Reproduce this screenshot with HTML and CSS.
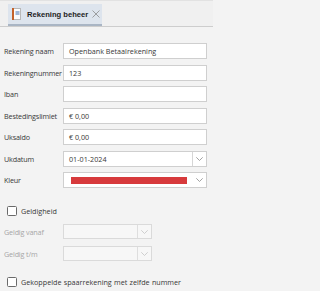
FILE: index.html
```html
<!DOCTYPE html>
<html lang="nl">
<head>
<meta charset="utf-8">
<link rel="stylesheet" href="styles.css">
</head>
<body>
<div class="tabbar">
  <div class="tab">
    <svg class="tab-icon" width="9" height="12" viewBox="0 0 9 12">
      <rect x="0.5" y="0.5" width="8" height="11" fill="#fbfbfb" stroke="#b8b8b8"/>
      <rect x="0" y="0" width="2" height="12" fill="#c4622a"/>
      <rect x="3.5" y="3" width="4" height="4" fill="#9fb6d6"/>
    </svg>
    <span class="tab-title">Rekening beheer</span>
    <svg class="tab-close" width="8" height="8" viewBox="0 0 8 8">
      <path d="M0.5 0.5 L7.5 7.5 M7.5 0.5 L0.5 7.5" stroke="#8a8a8a" stroke-width="0.8" fill="none"/>
    </svg>
  </div>
</div>
<div class="form">
  <div class="fields">
    <span class="label">Rekening naam</span>
    <div class="input">Openbank Betaalrekening</div>
    <span class="label">Rekeningnummer</span>
    <div class="input">123</div>
    <span class="label">Iban</span>
    <div class="input"></div>
    <span class="label">Bestedingslimiet</span>
    <div class="input">€ 0,00</div>
    <span class="label">Uksaldo</span>
    <div class="input">€ 0,00</div>
    <span class="label">Ukdatum</span>
    <div class="input combo">
      <span class="combo-text">01-01-2024</span>
      <span class="combo-btn split">
        <svg width="7" height="4" viewBox="0 0 7 4"><path d="M0.3 0.3 L3.5 3.5 L6.7 0.3" stroke="#8c8c8c" stroke-width="0.8" fill="none"/></svg>
      </span>
    </div>
    <span class="label">Kleur</span>
    <div class="input combo">
      <span class="combo-text"><span class="swatch"></span></span>
      <span class="combo-btn">
        <svg width="7" height="4" viewBox="0 0 7 4"><path d="M0.3 0.3 L3.5 3.5 L6.7 0.3" stroke="#8c8c8c" stroke-width="0.8" fill="none"/></svg>
      </span>
    </div>
  </div>

  <div class="check check-geldig">
    <span class="box"></span>
    <span class="check-text">Geldigheid</span>
  </div>

  <div class="fields sub">
    <span class="label disabled">Geldig vanaf</span>
    <div class="input combo off">
      <span class="combo-text"></span>
      <span class="combo-btn split">
        <svg width="7" height="4" viewBox="0 0 7 4"><path d="M0.3 0.3 L3.5 3.5 L6.7 0.3" stroke="#c4c4c4" stroke-width="0.8" fill="none"/></svg>
      </span>
    </div>
    <span class="label disabled">Geldig t/m</span>
    <div class="input combo off">
      <span class="combo-text"></span>
      <span class="combo-btn split">
        <svg width="7" height="4" viewBox="0 0 7 4"><path d="M0.3 0.3 L3.5 3.5 L6.7 0.3" stroke="#c4c4c4" stroke-width="0.8" fill="none"/></svg>
      </span>
    </div>
  </div>

  <div class="check check-koppel">
    <span class="box"></span>
    <span class="check-text">Gekoppelde spaarrekening met zelfde nummer</span>
  </div>
</div>
</body>
</html>
```

FILE: styles.css
```css
* { box-sizing: border-box; }
html, body { margin: 0; padding: 0; }
body {
  width: 213px;
  height: 291px;
  overflow: hidden;
  background: #f3f3f3;
  font-family: "Open Sans", "Noto Sans", sans-serif;
  font-size: 7.2px;
  color: #383838;
}
.tabbar {
  height: 27px;
  padding: 3px 0 0 8px;
  background: #f0f0f0;
  border-top: 1px solid #e2e2e2;
  border-bottom: 1px solid #cdcdcd;
  display: flex;
  align-items: flex-start;
}
.tab {
  width: 94px;
  height: 22px;
  background: #dde4ed;
  border-bottom: 2px solid #a9b5c4;
  display: flex;
  align-items: center;
  padding-left: 4px;
}
.tab-icon { flex: none; }
.tab-title {
  margin-left: 6px;
  font-family: "Liberation Sans", Arial, sans-serif;
  font-weight: bold;
  font-size: 7.6px;
  color: #1d1d1d;
}
.tab-close { margin-left: 4px; flex: none; }

.form { padding: 16px 0 0 4px; }
.fields {
  display: grid;
  grid-template-columns: 59px 144px;
  grid-auto-rows: 16px;
  row-gap: 5.5px;
  align-items: center;
}
.label { white-space: nowrap; letter-spacing: -0.15px; }
.label.disabled { color: #a6a6a6; }
.input {
  height: 16px;
  background: #ffffff;
  border: 1px solid #cfcfcf;
  padding-left: 5px;
  display: flex;
  align-items: center;
  white-space: nowrap;
}
.combo { padding-left: 0; }
.combo-text {
  flex: 1;
  padding-left: 5px;
  display: flex;
  align-items: center;
  height: 100%;
}
.combo-btn {
  width: 14px;
  height: 100%;
  display: flex;
  align-items: center;
  justify-content: center;
}
.combo-btn.split { border-left: 1px solid #d6d6d6; }
.swatch {
  display: block;
  width: 116px;
  height: 7px;
  margin-left: 2px;
  background: #d73a3c;
}

.check {
  display: flex;
  align-items: center;
  height: 10px;
  padding-left: 3px;
}
.box {
  width: 10px;
  height: 10px;
  background: #ffffff;
  border: 1px solid #6a6a6a;
  border-radius: 1.5px;
  flex: none;
}
.check-text { margin-left: 4px; white-space: nowrap; word-spacing: 0.4px; }
.check-geldig { margin-top: 18px; }
.sub {
  margin-top: 8px;
  grid-template-columns: 59px 89px;
  grid-auto-rows: 15px;
  row-gap: 7px;
}
.sub .input { height: 15px; }
.input.off { background: #f7f7f7; border-color: #dadada; }
.input.off .combo-btn.split { border-left-color: #dedede; }
.check-koppel { margin-top: 16px; }
```
